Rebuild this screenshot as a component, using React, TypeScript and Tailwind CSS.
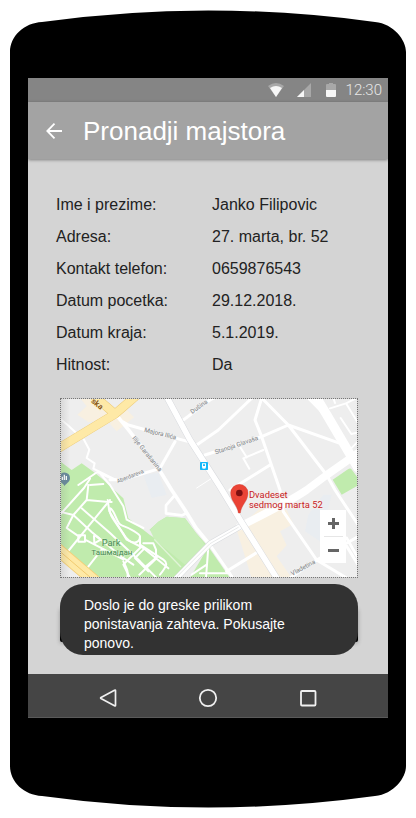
import React from 'react';

const details = [
  { label: 'Ime i prezime:', value: 'Janko Filipovic' },
  { label: 'Adresa:', value: '27. marta, br. 52' },
  { label: 'Kontakt telefon:', value: '0659876543' },
  { label: 'Datum pocetka:', value: '29.12.2018.' },
  { label: 'Datum kraja:', value: '5.1.2019.' },
  { label: 'Hitnost:', value: 'Da' },
];

function StatusBar() {
  return (
    <div className="flex h-6 items-center justify-end bg-[#858585] pr-[6px]">
      <svg className="h-[14px] w-4" viewBox="0 0 16 14" aria-hidden="true">
        <path d="M0 3Q8 -3 16 3L8 14Z" fill="#a8a8a8" />
        <path d="M2 5Q8 1 14 5L8 14Z" fill="#f7f7f7" />
      </svg>
      <svg className="ml-[13px] h-[14px] w-[14px]" viewBox="0 0 14 14" aria-hidden="true">
        <path d="M14 0V14H0Z" fill="#a8a8a8" />
        <path d="M7 7V14H0Z" fill="#f7f7f7" />
      </svg>
      <svg className="ml-[15px] h-[14px] w-[10px]" viewBox="0 0 10 14" aria-hidden="true">
        <path d="M0 7V2Q0 1 1 1H3V0H7V1H9Q10 1 10 2V7Z" fill="#a8a8a8" />
        <path d="M0 7H10V13Q10 14 9 14H1Q0 14 0 13Z" fill="#f7f7f7" />
      </svg>
      <span className="ml-[10px] font-['Roboto',sans-serif] text-[15px] leading-6 font-light text-[#e8e8e8]">12:30</span>
    </div>
  );
}

function CityMap() {
  return (
    <svg className="block w-full" viewBox="3 3 888 534" fontFamily="Roboto, sans-serif" role="img" aria-label="Mapa">
      <defs>
        <linearGradient id="edge">
          <stop offset="0" stopColor="#777" stopOpacity=".2" />
          <stop offset="1" stopColor="#777" stopOpacity="0" />
        </linearGradient>
      </defs>
      <rect width="894" height="540" fill="#eeeeee" />
      <g fill="#f8f0e1">
        <path d="M60 0L100 0L160 48L115 70L85 72L52 50L80 25Z" />
        <path d="M165 50L195 30L222 58L190 84L170 100L150 78Z" />
        <path d="M530 395L600 331L680 335L700 378L660 400L680 442L650 475L695 540L575 540Z" />
      </g>
      <path d="M745 350L790 290L815 290L780 430L735 400ZM250 230L295 225L320 290L275 300Z" fill="#e9edf1" />

      {/* parks */}
      <g fill="#c0ebad">
        <path d="M0 190L35 216L65 196L100 221L128 244L190 301L205 361L270 411L284 420L288 405L268 396L295 371L320 356L375 361L408 405L445 446L350 540H100L0 450Z" />
        <path d="M390 540L445 446L510 540Z" />
        <path d="M818 245L865 213Q872 209 876 216L894 240V262L845 290Z" />
      </g>
      <path d="M270 396L295 371L320 356L375 361L408 405L440 446L375 500L284 425Z" fill="#c9eeb9" />

      <g fill="none" stroke="#fff" strokeLinejoin="round" strokeLinecap="round">
        {/* park paths */}
        <g strokeWidth="6">
          <path d="M0 341L40 351L80 306L85 261M0 350L72 270L90 242M80 306L138 311L155 312M150 306L85 385L20 465" />
          <path d="M55 261L112 222L165 246M90 261L130 258M118 224L150 261L190 325L200 365L250 390" />
          <path d="M65 331L150 405L240 490L290 540M40 351L95 402L190 480L220 500" />
          <path d="M40 351L20 390L52 412M75 425L190 484M55 412H75V431H55ZM105 412L122 425L103 436L102 414" />
          <path d="M150 331C165 335 170 380 185 382C210 390 240 410 240 415C240 440 210 440 192 410C165 370 145 350 150 331Z" />
          <path d="M143 306L148 340L200 425L250 450L325 511M240 416V450L190 500L210 540M250 436H280L288 455V482L238 530" />
          <path d="M240 440L310 485C325 495 320 505 300 530M258 505L292 476M80 512L125 455L190 475M190 490C202 515 205 520 202 540M250 455L225 480L265 520" />
          <path d="M445 446L438 540M420 526H510M395 530L440 500" />
        </g>
        <path d="M284 425L362 506" stroke="#e0f4d7" strokeWidth="4" />
        {/* lanes */}
        <g strokeWidth="6">
          <path d="M0 62L22 80L52 108M540 146L560 178M610 156L550 181L568 212M72 125L88 155L80 180L104 196L100 212L165 244" />
          <path d="M810 31L858 16L894 75M842 60L874 108L892 104M858 16L890 0M820 0L825 15M894 108V130L865 160" />
          <path d="M410 270L455 241" strokeWidth="3" />
          <path d="M894 480L860 420M345 291L318 322V346L366 352L380 345" strokeWidth="8" />
        </g>
        {/* streets */}
        <g strokeWidth="9">
          <path d="M175 58L205 95L295 211L335 276L375 336L408 390L450 441" strokeWidth="11" />
          <path d="M205 81L385 131M205 81L190 72M345 131L300 211L190 245H150M370 66L450 6L462 0M410 141L475 96L580 -4" />
          <path d="M435 171L605 116L685 81L840 136M605 0L685 81L800 231" />
          <path d="M605 0L585 66L605 116L660 276L670 341L770 486L860 540M770 486L894 416M630 201L510 276" />
          <path d="M745 0L795 51M800 231L825 276L894 380M450 441L515 535M595 461L500 520M690 540L770 486M860 445L894 500" />
        </g>
        <path d="M894 165L800 231L740 276Q690 310 540 385" strokeWidth="23" />
        <path d="M545 383L450 437L350 540" stroke="#d8dade" strokeWidth="18" />
        <path d="M545 383L450 437L350 540" strokeWidth="15" />
        <path d="M535 388L450 437L347 540" stroke="#dcdee0" strokeWidth="2" />
        <path d="M320 -4L390 126L480 266L540 365L650 540" stroke="#d8dade" strokeWidth="20" />
        <path d="M320 -4L390 126L480 266L540 365L650 540" strokeWidth="17" />
        <path d="M765 -8L800 50L894 210" strokeWidth="28" />
      </g>

      {/* boulevards */}
      <g fill="none" strokeLinejoin="round">
        <path d="M-10 154L165 48L230 -8M165 48L100 -8" stroke="#eccb79" strokeWidth="27" />
        <path d="M-10 154L165 48L230 -8M165 48L100 -8" stroke="#fee9a6" strokeWidth="24" />
        <path d="M-10 452L105 550" stroke="#f3cf78" strokeWidth="38" />
        <path d="M-10 452L105 550" stroke="#fee9a6" strokeWidth="33" />
        <path d="M-10 452L105 550" stroke="#f1ca70" strokeWidth="3" />
      </g>

      {/* street names */}
      <g fill="#7c8184" stroke="#f2f2f2" strokeWidth="4" paintOrder="stroke" fontSize="19" fontWeight="400">
        <text transform="translate(252 101) rotate(14)">Majora Ilića</text>
        <text transform="translate(216 121) rotate(51)">Ilije Garašanina</text>
        <text transform="translate(173 256) rotate(-22)" fontSize="17">Aberdareva</text>
        <text transform="translate(397 48) rotate(-36)">Dušina</text>
        <text transform="translate(467 169) rotate(-19)">Stanoja Glavaša</text>
        <text transform="translate(697 533) rotate(-28)">Vladetina</text>
      </g>
      <text transform="translate(92 12) rotate(39)" fill="#8a5a1e" stroke="#fff1c0" strokeWidth="4" paintOrder="stroke" fontSize="24" fontWeight="700">ska</text>
      <g fill="#4c8c58" stroke="#d0efc2" strokeWidth="3" paintOrder="stroke" fontWeight="400">
        <text x="125" y="443" fontSize="28">Park</text>
        <text x="94" y="470" fontSize="24">Ташмајдан</text>
      </g>

      {/* bus stop */}
      <rect x="420" y="192" width="24" height="24" rx="2" fill="#16b8f8" />
      <path d="M426 196H438V209H436V213H433V210H431V213H428V209H426Z" fill="#fff" />
      <path d="M429 199H435V204H429Z" fill="#16b8f8" />

      {/* museum pin */}
      <path d="M-3 240A16 16 0 1 1 30 240C30 253 18 256 14 264C10 256 -3 253 -3 240Z" fill="#67899b" />
      <path d="M7 236V246M13 230V246M19 234V246" stroke="#fff" strokeWidth="4" />

      {/* selected address */}
      <path d="M512 285A26 26 0 1 1 564 285C564 310 544 320 541 345H535C532 320 512 310 512 285Z" fill="#ea4335" stroke="#c5362b" strokeWidth="1" />
      <circle cx="538" cy="285" r="10" fill="#7d0f10" />
      <g fill="#c5221f" stroke="#f6eeec" strokeWidth="4" paintOrder="stroke" fontSize="28" fontWeight="400">
        <text x="567" y="299">Dvadeset</text>
        <text x="567" y="331">sedmog marta 52</text>
      </g>
      <rect width="30" height="540" fill="url(#edge)" />
    </svg>
  );
}

function MapPanel() {
  return (
    <div className="relative mt-[17px] mr-[30px] ml-8 border border-dotted border-[#777777]">
      <CityMap />
      <div className="absolute right-[11px] bottom-[14px] flex w-[26px] flex-col items-center bg-white">
        <button type="button" aria-label="Uvecaj" className="flex h-[26px] w-full items-center justify-center">
          <svg className="h-[11px] w-[11px]" viewBox="0 0 11 11" aria-hidden="true">
            <path d="M0 5.5H11M5.5 0V11" stroke="#666" strokeWidth="3" />
          </svg>
        </button>
        <span className="h-px w-[19px] bg-[#e6e6e6]" />
        <button type="button" aria-label="Umanji" className="flex h-[26px] w-full items-center justify-center">
          <svg className="h-[11px] w-[11px]" viewBox="0 0 11 11" aria-hidden="true">
            <path d="M0 5.5H11" stroke="#666" strokeWidth="3" />
          </svg>
        </button>
      </div>
    </div>
  );
}

function NavBar() {
  return (
    <nav className="flex h-11 items-center justify-center gap-[76px] border-b border-[#5a5a5a] bg-[#454545] pt-1 text-[#f0f0f0]">
      <button type="button" aria-label="Nazad">
        <svg className="h-6 w-6" viewBox="0 0 24 24" fill="none" stroke="currentColor" strokeWidth="1.7" strokeLinejoin="round" aria-hidden="true">
          <path d="M19.500 4.500V19.500Q19.500 20.300 18.500 19.800L5 12.600Q4.300 12 5 11.400L18.500 4.200Q19.500 3.700 19.500 4.500Z" />
        </svg>
      </button>
      <button type="button" aria-label="Pocetna">
        <svg className="h-6 w-6" viewBox="0 0 24 24" fill="none" stroke="currentColor" strokeWidth="1.8" aria-hidden="true">
          <circle cx="12" cy="12" r="8.200" />
        </svg>
      </button>
      <button type="button" aria-label="Aplikacije">
        <svg className="h-6 w-6" viewBox="0 0 24 24" fill="none" stroke="currentColor" strokeWidth="1.800" aria-hidden="true">
          <rect x="5" y="5" width="14.500" height="14.500" rx="1" />
        </svg>
      </button>
    </nav>
  );
}

export default function App() {
  return (
    <div className="bg-white p-[10px] font-['Liberation_Sans',Arial,sans-serif]">
      <svg className="block h-[42px] w-full" viewBox="0 0 396 42" preserveAspectRatio="none" aria-hidden="true">
        <path d="M0 42C0 26 14 13 32 12Q198 -11 365 12C384 14 396 30 396 42Z" />
      </svg>
      <div className="bg-black px-[18px] pt-[26px] pb-12">
        <div className="bg-[#d4d4d4]">
          <StatusBar />
          <header className="flex h-[57px] items-center bg-[#a3a3a3] pl-[18px] shadow-[0_1px_3px_rgba(0,0,0,0.4)]">
            <button type="button" aria-label="Nazad" className="text-white">
              <svg className="h-4 w-4" viewBox="0 0 16 16" fill="none" stroke="currentColor" strokeWidth="1.800" aria-hidden="true">
                <path d="M16 8H1.500M8.500 0.700L1.300 8L8.500 15.300" />
              </svg>
            </button>
            <h1 className="ml-[21px] text-[26px] leading-8 text-white">Pronadji majstora</h1>
          </header>
          <main className="pt-[30px] pb-[19px]">
            <dl className="px-7 text-base leading-8 text-[#222222]">
              {details.map((item) => (
                <div key={item.label} className="flex">
                  <dt className="w-[156px] shrink-0">{item.label}</dt>
                  <dd>{item.value}</dd>
                </div>
              ))}
            </dl>
            <MapPanel />
            <div role="alert" className="relative isolate mt-[6px] mr-[30px] ml-8">
              <span className="absolute inset-x-0 top-6 bottom-[13px] -z-10 rounded-xs bg-black shadow-[0_1px_4px_rgba(0,0,0,0.3)]" />
              <p className="rounded-[23px] bg-[#323232] px-6 pt-3 pb-[2px] text-sm leading-[19px] font-normal text-white">
                Doslo je do greske prilikom ponistavanja zahteva. Pokusajte ponovo.
              </p>
            </div>
          </main>
          <NavBar />
        </div>
      </div>
      <svg className="block h-[42px] w-full" viewBox="0 0 396 42" preserveAspectRatio="none" aria-hidden="true">
        <path d="M0 0C0 16 14 29 32 30Q198 53 365 30C384 28 396 12 396 0Z" />
      </svg>
    </div>
  );
}
